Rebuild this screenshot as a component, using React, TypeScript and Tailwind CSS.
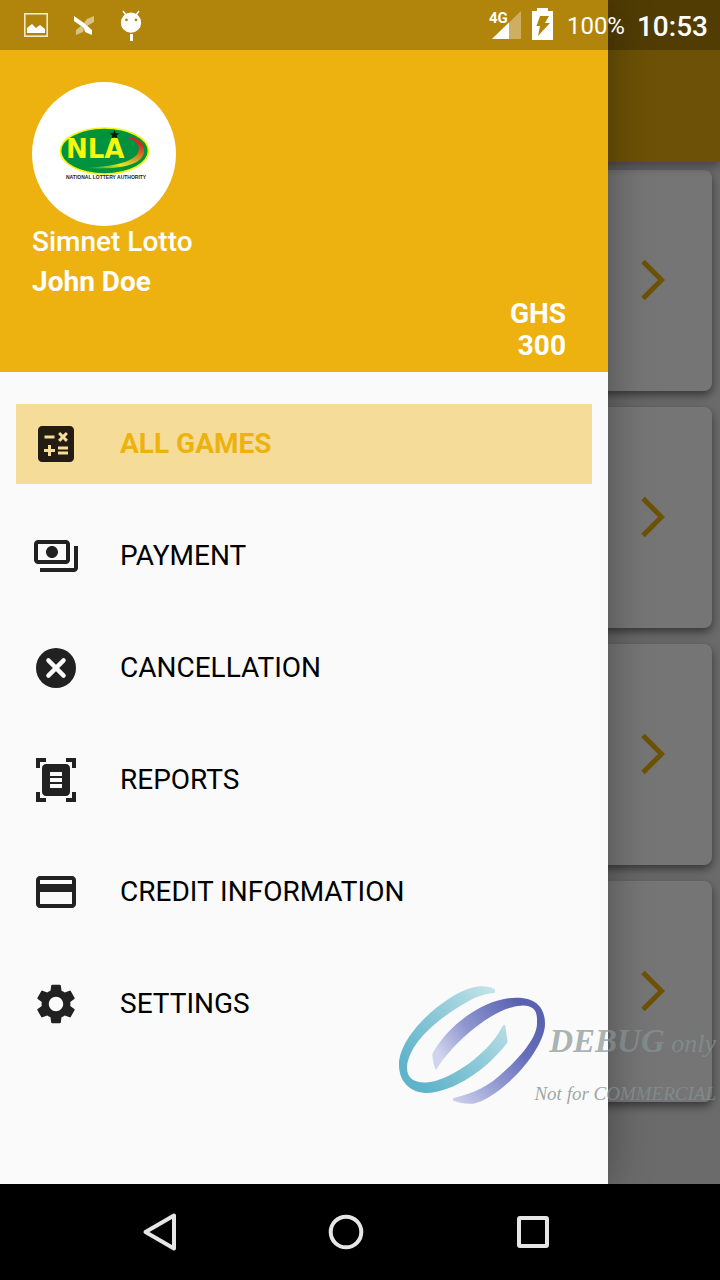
import type { ReactNode } from "react";
import {
  MdCalculate,
  MdCreditCard,
  MdOutlinePayments,
  MdSettings,
} from "react-icons/md";

function CancelIcon() {
  return (
    <svg viewBox="0 0 24 24" className="size-12" aria-hidden="true">
      <circle cx="12" cy="12" r="10" fill="currentColor" />
      <path d="M8.200 8.200l7.600 7.600M15.800 8.200l-7.600 7.600" stroke="#fafafa" strokeWidth="2.200" strokeLinecap="round" />
    </svg>
  );
}

function ScannerIcon() {
  return (
    <svg viewBox="0 0 24 24" className="size-12" fill="currentColor" fillRule="evenodd" aria-hidden="true">
      <path d="M7 3H4v3H2V1h5v2zM22 6V1h-5v2h3v3h2zM7 21H4v-3H2v5h5v-2zM20 18v3h-3v2h5v-5h-2zM19 18c0 1.1-.9 2-2 2H7c-1.1 0-2-.9-2-2V6c0-1.1.9-2 2-2h10c1.1 0 2 .9 2 2v12zM15 8H9v2h6V8zM15 11H9v2h6v-2zM15 14H9v2h6v-2z" />
    </svg>
  );
}

function NlaLogo() {
  return (
    <svg viewBox="0 0 92 56" className="h-14 w-[92px]" role="img" aria-label="National Lottery Authority">
      <defs>
        <linearGradient id="swoosh" x1="0" y1="1" x2="0.6" y2="0">
          <stop offset="0" stopColor="#00923f" />
          <stop offset="0.35" stopColor="#e5e81a" />
          <stop offset="0.6" stopColor="#c9a227" />
          <stop offset="1" stopColor="#e31e24" />
        </linearGradient>
      </defs>
      <ellipse cx="46.500" cy="25" rx="44" ry="23" fill="#00923f" stroke="#f5f50a" strokeWidth="1.700" />
      <path d="M69 12C81 10 87 19 86 27C83 39 63 44 25 42C49 41 73 38 80 27C83 20 79 14 69 12Z" fill="url(#swoosh)" />
      <path d="M56.500 4l1.300 3.200 3.700.1-2.900 2.200 1.100 3.500-3.200-2-3.200 2 1.100-3.500-2.900-2.200 3.700-.1z" fill="#151515" />
      <text x="8" y="32" fontSize="26" className="font-['DejaVu_Sans',sans-serif] font-bold" fill="#f8f80c">NLA</text>
      <text x="8" y="53" fontSize="5" className="font-['Liberation_Sans',sans-serif] font-bold" fill="#222222">NATIONAL LOTTERY AUTHORITY</text>
    </svg>
  );
}

function StatusBar() {
  return (
    <div className="z-30 flex h-[50px] items-center justify-between self-start bg-black/25 pl-6 pr-3 text-white [grid-area:1/1]">
      <div className="flex items-center gap-[26px]">
        <svg viewBox="0 0 24 24" className="size-6" aria-hidden="true">
          <rect x="0.800" y="0.800" width="22.400" height="22.400" fill="none" stroke="#f3e8c8" strokeWidth="1.600" />
          <path d="M3 20v-5l5-4 4 4 4-3 5 4v4z" fill="#fff" />
        </svg>
        <svg viewBox="0 0 20 20" className="mt-0.5 size-5" aria-hidden="true">
          <path d="M20 0v6L13 10 10 7 13 3zM2 19v-5l5-4 3 2-1 4z" fill="#fff" opacity="0.5" />
          <path d="M0 0v5l10 7 1 4 7 3v-5l-8-7z" fill="#fff" />
        </svg>
        <svg viewBox="0 0 22 32" className="h-8 w-[22px]" aria-hidden="true">
          <path d="M3 2l3 4M19 2l-3 4" stroke="#fff" strokeWidth="1.500" />
          <path fillRule="evenodd" fill="#fff" d="M11 3.500A10 10 0 1 0 11 23.800A10 10 0 1 0 11 3.500zM6.500 9.500a1.400 1.400 0 1 1 0 2.800A1.400 1.400 0 1 1 6.500 9.500zM16 9.500a1.400 1.400 0 1 1 0 2.800A1.400 1.400 0 1 1 16 9.500z" />
          <rect x="10" y="25" width="3" height="7" fill="#fff" />
        </svg>
      </div>
      <div className="flex items-center">
        <div className="flex items-center gap-[10px] pb-0.5">
          <svg viewBox="0 0 33 32" className="h-8 w-[33px]" aria-hidden="true">
            <path d="M32 3v28H3z" fill="#fff" opacity="0.350" />
            <path d="M20 14.500V31H3z" fill="#fff" />
            <text x="0" y="15" fontSize="15" fill="#fff" className="font-['Roboto',sans-serif] font-bold">4G</text>
          </svg>
          <svg viewBox="0 0 21 32" className="h-8 w-[21px]" aria-hidden="true">
            <path fillRule="evenodd" fill="#fff" d="M5 0h11v3h5v29H0V3h5zM8 8h9l-4 7h5L6 28l2-10H4.500z" />
          </svg>
        </div>
        <span className="ml-[14px] mt-0.5 text-2xl leading-8">100%</span>
        <span className="ml-3 mt-1 text-[28px] font-medium leading-8">10:53</span>
      </div>
    </div>
  );
}

function GameList() {
  return (
    <main className="flex flex-col bg-[#e9e9e9] [grid-area:1/1]">
      <div className="z-0 h-[162px] bg-[#ebb00e] shadow-[0_4px_10px_rgba(0,0,0,0.4)]" />
      <div className="flex flex-col gap-4 px-2 pt-2">
        {["Game 1", "Game 2", "Game 3", "Game 4"].map((name) => (
          <button
            key={name}
            type="button"
            aria-label={name}
            className="flex h-[221px] items-center justify-end rounded-lg bg-white pb-0.5 pr-[47px] shadow-[0_4px_10px_rgba(0,0,0,0.5)]"
          >
            <svg viewBox="0 0 24 42" className="h-[42px] w-6" aria-hidden="true">
              <path d="M2 2.500L20.500 21L2 39.500" fill="none" stroke="#edb20f" strokeWidth="5" />
            </svg>
          </button>
        ))}
      </div>
    </main>
  );
}

type Item = { label: string; icon: ReactNode; active?: boolean };

const items: Item[] = [
  { label: "ALL GAMES", icon: <MdCalculate className="size-12" />, active: true },
  { label: "PAYMENT", icon: <MdOutlinePayments className="size-12" /> },
  { label: "CANCELLATION", icon: <CancelIcon /> },
  { label: "REPORTS", icon: <ScannerIcon /> },
  { label: "CREDIT INFORMATION", icon: <MdCreditCard className="size-12" /> },
  { label: "SETTINGS", icon: <MdSettings className="size-12" /> },
];

function Drawer() {
  return (
    <aside className="z-20 mr-28 flex flex-col bg-[#fafafa] shadow-[0_0_40px_rgba(0,0,0,0.35)] [grid-area:1/1]">
      <header className="flex flex-col bg-[#edb20f] px-8 pb-[10px] pt-[82px] text-[28px] leading-8 text-white">
        <div className="flex size-36 items-center justify-center rounded-full bg-white">
          <NlaLogo />
        </div>
        <p className="font-medium">Simnet Lotto</p>
        <p className="mt-2 font-bold">John Doe</p>
        <p className="pr-[10px] text-right font-bold">
          GHS
          <br />
          300
        </p>
      </header>
      <nav className="flex flex-col gap-8 px-4 py-8">
        {items.map(({ label, icon, active }) => (
          <a
            key={label}
            href="#"
            className={
              active
                ? "flex h-20 items-center gap-10 bg-[#f5dd99] px-4 text-[28px] font-bold leading-8"
                : "flex h-20 items-center gap-10 px-4 text-[28px] leading-8"
            }
          >
            <span className={active ? "text-[#221c12]" : "text-[#212121]"}>{icon}</span>
            <span className={active ? "text-[#edb20f]" : "text-black"}>{label}</span>
          </a>
        ))}
      </nav>
    </aside>
  );
}

function Watermark() {
  return (
    <div className="pointer-events-none absolute bottom-[78px] right-0 z-40 flex font-['Liberation_Serif',serif] italic">
      <svg viewBox="39 36 441 357" className="h-[119px] w-[147px]" aria-hidden="true">
        <defs>
          <linearGradient id="teal" x1="0.100" y1="0.800" x2="0.950" y2="0.100">
            <stop offset="0" stopColor="#5fb3cb" />
            <stop offset="0.500" stopColor="#8ecad8" />
            <stop offset="1" stopColor="#c5e4ea" />
          </linearGradient>
          <linearGradient id="violet" x1="0" y1="0.650" x2="0.850" y2="0.250">
            <stop offset="0" stopColor="#d0d3ec" />
            <stop offset="0.400" stopColor="#8f97d1" />
            <stop offset="1" stopColor="#5962b0" />
          </linearGradient>
          <linearGradient id="violetTail" gradientUnits="userSpaceOnUse" x1="200" y1="390" x2="450" y2="130">
            <stop offset="0" stopColor="#d0d3ec" />
            <stop offset="0.400" stopColor="#8f97d1" />
            <stop offset="0.700" stopColor="#666fbc" />
            <stop offset="1" stopColor="#5962b0" />
          </linearGradient>
        </defs>
        <path fill="url(#teal)" d="M327 46C310 36 280 34 255 42C180 62 39 180 39 272C39 325 75 357 125 357C205 352 300 290 365 205L363 190L358 155C355 150 350 155 345 165C310 230 220 300 150 320C105 332 63 325 63 282C66 200 180 115 265 72Q295 59 327 56Z" />
        <path fill="url(#violet)" d="M139 240C180 160 290 72 390 71C450 71 477 100 477 150H453L453 135C453 105 435 93 405 95C330 98 220 190 165 265L150 288C145 280 140 260 139 240Z" />
        <path fill="url(#violetTail)" d="M477 149C477 230 340 375 262 389C240 391 215 387 199 378L203 372C240 362 290 350 340 305C400 255 453 190 453 149Z" />
      </svg>
      <div className="-ml-3 flex flex-col items-end pr-1 pt-[37px] text-right text-[#84908f]/80">
        <p className="whitespace-nowrap text-[26px] leading-9">
          <span className="text-[33px] font-bold text-[#879495]/70">DEBUG</span> only
        </p>
        <p className="mt-5 whitespace-nowrap text-[19px] leading-6">Not for COMMERCIAL</p>
      </div>
    </div>
  );
}

function SystemNav() {
  const cell = "flex items-center justify-center";
  return (
    <div className="grid h-24 grid-cols-3 bg-black pl-[66px] pr-[94px]">
      <button type="button" aria-label="Back" className={cell}>
        <svg viewBox="0 0 40 40" className="size-10" aria-hidden="true">
          <path d="M35 3.500v33L6.500 20z" fill="none" stroke="#e6e6e6" strokeWidth="4" strokeLinejoin="round" />
        </svg>
      </button>
      <button type="button" aria-label="Home" className={cell}>
        <svg viewBox="0 0 40 40" className="size-10" aria-hidden="true">
          <circle cx="20" cy="20" r="15.300" fill="none" stroke="#e6e6e6" strokeWidth="4" />
        </svg>
      </button>
      <button type="button" aria-label="Recent apps" className={cell}>
        <svg viewBox="0 0 40 40" className="size-10" aria-hidden="true">
          <rect x="6" y="6" width="28" height="28" rx="1" fill="none" stroke="#e6e6e6" strokeWidth="4" strokeLinejoin="round" />
        </svg>
      </button>
    </div>
  );
}

export default function App() {
  return (
    <div className="flex min-h-screen flex-col font-['Roboto',sans-serif]">
      <div className="relative grid flex-1 overflow-hidden">
        <GameList />
        <div className="z-10 bg-black/[0.54] [grid-area:1/1]" />
        <Drawer />
        <StatusBar />
        <Watermark />
      </div>
      <SystemNav />
    </div>
  );
}
